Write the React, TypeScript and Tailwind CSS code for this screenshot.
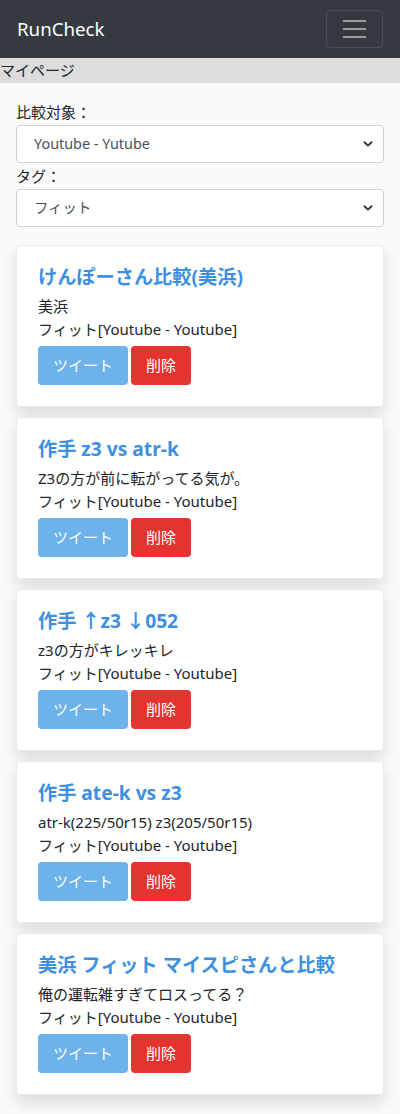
// @ts-nocheck
import React from 'react';

const posts = [
  { title: "けんぽーさん比較(美浜)", memo: "美浜" },
  { title: "作手 z3 vs atr-k", memo: "Z3の方が前に転がってる気が。" },
  { title: "作手 ↑z3 ↓052", memo: "z3の方がキレッキレ" },
  { title: "作手 ate-k vs z3", memo: "atr-k(225/50r15) z3(205/50r15)" },
  { title: "美浜 フィット マイスピさんと比較", memo: "俺の運転雑すぎてロスってる？" },
];

function Chevron() {
  return (
    <svg className="absolute right-[11px] top-1/2 -translate-y-1/2 pointer-events-none" width="10" height="8" viewBox="0 0 10 8">
      <path d="M1.5 2.2 L5 5.6 L8.5 2.2" fill="none" stroke="#343a40" strokeWidth="2" strokeLinecap="round" strokeLinejoin="round" />
    </svg>
  );
}

function Select({ value }) {
  return (
    <div className="relative">
      <select
        defaultValue={value}
        className="w-full h-[38px] appearance-none bg-white border border-[#ced4da] rounded-[4px] pl-[17px] pr-8 text-[14.4px] text-[#495057] outline-none"
      >
        <option>{value}</option>
      </select>
      <Chevron />
    </div>
  );
}

export default function App() {
  return (
    <main className="min-h-screen w-[400px] bg-[#f8fafc] text-[#212529] font-['Noto_Sans','Noto_Sans_CJK_JP',sans-serif]">
      {/* ナビバー */}
      <header className="h-[58px] bg-[#343a40] flex items-center justify-between pl-[17px] pr-[17px]">
        <span className="text-[18.7px] text-white leading-none">RunCheck</span>
        <button className="w-[57px] h-[38px] border border-white/10 rounded-[4px] flex flex-col items-center justify-center gap-[6px]">
          <span className="block w-[23px] h-[2px] bg-white/50" />
          <span className="block w-[23px] h-[2px] bg-white/50" />
          <span className="block w-[23px] h-[2px] bg-white/50" />
        </button>
      </header>

      <div className="h-[25px] bg-[#dcdcdc] text-[15px] leading-[25px] text-[#212529]">マイページ</div>

      <div className="px-4 pt-[17px] pb-[18px]">
        <div className="text-[15px] leading-[25px]">比較対象：</div>
        <Select value="Youtube - Yutube" />
        <div className="text-[15px] leading-[26px]">タグ：</div>
        <Select value="フィット" />

        <div className="mt-[18px] flex flex-col gap-[10px]">
          {posts.map((p, i) => (
            <div key={i} className="bg-white border border-black/[0.08] rounded-[4px] shadow-[0_0.5rem_1rem_rgba(0,0,0,0.12)] h-[162px] pt-[20px] px-[21px]">
              <h5 className="text-[19.2px] font-bold leading-[22px] text-[#3d8fe2] mb-[7px]">{p.title}</h5>
              <p className="text-[15px] leading-[23px]">{p.memo}</p>
              <p className="text-[15px] leading-[23px]">フィット[Youtube - Youtube]</p>
              <div className="flex gap-[3px] mt-[5px]">
                <button className="h-[39px] px-[15px] rounded-[4px] bg-[#6cb2eb] text-white text-[15px]">ツイート</button>
                <button className="h-[39px] px-[15px] rounded-[4px] bg-[#e3342f] text-white text-[15px]">削除</button>
              </div>
            </div>
          ))}
        </div>
      </div>
    </main>
  );
}
